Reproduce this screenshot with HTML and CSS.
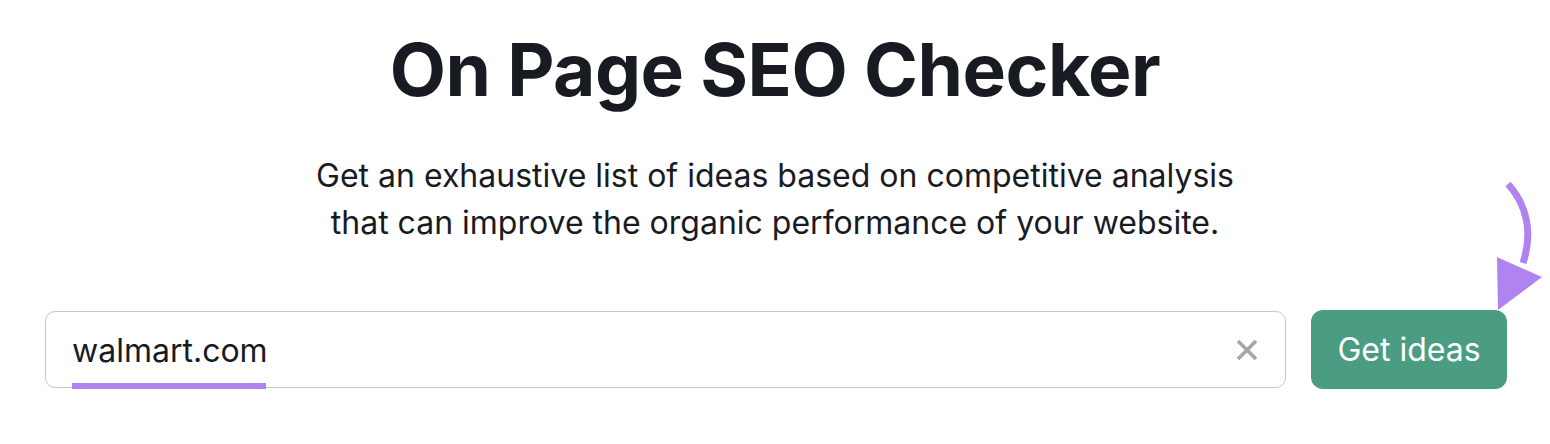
FILE: index.html
```html
<!DOCTYPE html>
<html lang="en">
<head>
<meta charset="utf-8">
<title>On Page SEO Checker</title>
<link rel="stylesheet" href="styles.css">
</head>
<body>
<main class="page">
  <h1 class="title">On Page SEO Checker</h1>
  <p class="subtitle">Get an exhaustive list of ideas based on competitive analysis<br>that can improve the organic performance of your website.</p>
  <form class="search" onsubmit="return false">
    <div class="field">
      <span class="value">walmart.com</span>
      <span class="underline"></span>
      <svg class="clear" width="22" height="22" viewBox="0 0 22 22" aria-hidden="true">
        <path d="M2 2 L20 20 M20 2 L2 20" stroke="#a3a6ad" stroke-width="3.6" stroke-linecap="butt" fill="none"/>
      </svg>
    </div>
    <button class="btn" type="submit">Get ideas</button>
    <svg class="arrow" width="70" height="140" viewBox="0 0 70 140" aria-hidden="true">
      <path d="M28 9 C 45 28, 54 55, 43 88" stroke="#b084f0" stroke-width="7" fill="none"/>
      <polygon points="17,82 62,102 18,135" fill="#b084f0"/>
    </svg>
  </form>
</main>
</body>
</html>
```
FILE: styles.css
```css
html, body {
  margin: 0;
  padding: 0;
  background: #ffffff;
}
body {
  font-family: Inter, "Noto Sans", "Liberation Sans", sans-serif;
  color: #191b23;
}
.page {
  display: flex;
  flex-direction: column;
  align-items: center;
  padding-top: 26px;
}
.title {
  margin: 0;
  font-size: 73px;
  font-weight: 700;
  line-height: 88px;
  letter-spacing: -0.5px;
  color: #191b23;
}
.subtitle {
  margin: 38px 0 0;
  text-align: center;
  font-size: 32px;
  font-weight: 400;
  line-height: 47px;
  color: #191b23;
}
.search {
  position: relative;
  align-self: stretch;
  display: flex;
  align-items: center;
  gap: 25px;
  padding: 0 43px 0 45px;
  margin-top: 64px;
}
.field {
  position: relative;
  flex: 0 0 1241px;
  box-sizing: border-box;
  height: 77px;
  border: 1.5px solid #c5c7cc;
  border-radius: 10px;
  display: flex;
  align-items: center;
  padding: 2px 27px 0 26px;
}
.value {
  flex: 1;
  font-size: 32px;
  line-height: 40px;
  color: #191b23;
}
.underline {
  position: absolute;
  left: 26px;
  width: 194px;
  bottom: -5px;
  height: 9px;
  background: #b084f0;
}
.clear {
  flex: none;
  margin: -2px 0 0 0;
}
.btn {
  flex: 0 0 196px;
  height: 79px;
  border: none;
  border-radius: 12px;
  background: #4a9d82;
  color: #ffffff;
  font-family: inherit;
  font-size: 32px;
  font-weight: 400;
  padding: 0;
}
.arrow {
  position: absolute;
  left: 1480px;
  top: -135px;
  overflow: visible;
}
```
